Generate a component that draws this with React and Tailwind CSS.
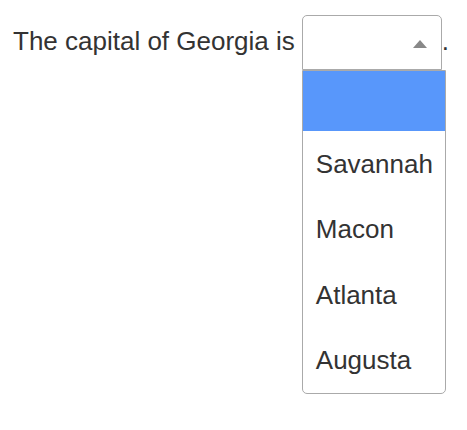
const options = [
  { label: "", h: "h-[60px]", active: true },
  { label: "Savannah", h: "h-[65px]" },
  { label: "Macon", h: "h-[66px]" },
  { label: "Atlanta", h: "h-[65px]" },
  { label: "Augusta", h: "h-[66px]" },
];

const App = () => {
  return (
    <div className="min-h-[430px] bg-white pl-[13px] pt-[15px] flex items-start font-['Liberation_Sans',Arial,sans-serif] text-[26px] text-[#333]">
      <span className="mt-[11px] leading-[30px] whitespace-nowrap">The capital of Georgia is</span>

      <div className="relative ml-[7px]">
        {/* select box, open state */}
        <div className="w-[140px] h-[55px] border border-[#aaa] rounded-t-[5px] bg-white flex items-center justify-end pr-[14px]">
          <svg width="14" height="8" viewBox="0 0 14 8" className="mt-[3px]">
            <path d="M7 0 L14 8 L0 8 Z" fill="#888" />
          </svg>
        </div>

        {/* dropdown */}
        <div className="absolute left-0 top-[55px] w-[144px] border border-[#aaa] rounded-b-[5px] bg-white overflow-hidden">
          {options.map((o, i) => (
            <div
              key={i}
              className={`${o.h} flex items-center pl-[13px] leading-[30px] ${
                o.active ? "bg-[#5897fb] text-white" : "text-[#333]"
              }`}
            >
              {o.label}
            </div>
          ))}
        </div>
      </div>

      <span className="mt-[11px] leading-[30px]">.</span>
    </div>
  );
};

export default App;
